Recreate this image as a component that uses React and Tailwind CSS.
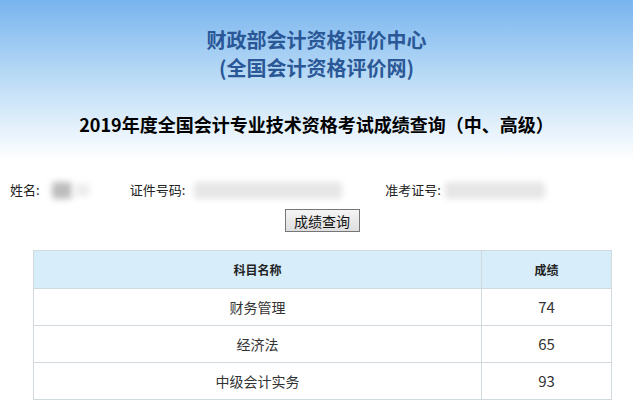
import React from 'react'

const font = { fontFamily: '"Noto Sans CJK SC", "Noto Sans", sans-serif' }

const rows = [
  { name: '财务管理', score: 74 },
  { name: '经济法', score: 65 },
  { name: '中级会计实务', score: 93 },
]

function Blur({ className }) {
  return <div className={`rounded-sm blur-[3px] ${className}`} />
}

export default function App() {
  return (
    <div className="w-[633px] h-[415px] overflow-hidden bg-white" style={font}>
      <div className="h-[160px] bg-gradient-to-b from-[#78b4ee] via-[#bcdcf6] to-white flex flex-col items-center">
        <h1 className="mt-[26px] text-[20px] leading-[28px] font-bold text-[#2a5796]">财政部会计资格评价中心</h1>
        <h2 className="text-[20px] leading-[28px] font-bold text-[#2a5796]">(全国会计资格评价网)</h2>
        <h3 className="mt-[29px] text-[18px] leading-[26px] font-bold text-black">
          2019年度全国会计专业技术资格考试成绩查询（中、高级）
        </h3>
      </div>

      <div className="flex items-center h-[20px] mt-[20px] text-[13px] text-[#222]">
        <span className="ml-[10px]">姓名:</span>
        <Blur className="ml-[12px] w-[20px] h-[17px] bg-[#bdbdbd]" />
        <Blur className="ml-[2px] w-[16px] h-[12px] bg-[#ececec]" />
        <span className="ml-[40px]">证件号码:</span>
        <Blur className="ml-[9px] w-[148px] h-[17px] bg-[#e6e6e6]" />
        <span className="ml-[43px]">准考证号:</span>
        <Blur className="ml-[4px] w-[100px] h-[17px] bg-[#e6e6e6]" />
      </div>

      <div className="flex justify-center mt-[9px] pl-[11px]">
        <button className="w-[75px] h-[23px] border border-[#767676] bg-gradient-to-b from-[#f5f5f5] to-[#dedede] text-[14px] leading-none text-[#111]">
          成绩查询
        </button>
      </div>

      <table className="ml-[33px] mt-[18px] w-[579px] border-collapse text-[#333]">
        <thead>
          <tr className="h-[38px] bg-[#d7edfa]">
            <th className="border border-[#cfd9de] text-[12px] font-bold text-[#222] w-[448px]">科目名称</th>
            <th className="border border-[#cfd9de] text-[12px] font-bold text-[#222]">成绩</th>
          </tr>
        </thead>
        <tbody>
          {rows.map(r => (
            <tr key={r.name} className="h-[37px]">
              <td className="border border-[#cfd9de] text-center text-[14px]">{r.name}</td>
              <td className="border border-[#cfd9de] text-center text-[15px]">{r.score}</td>
            </tr>
          ))}
        </tbody>
      </table>
    </div>
  )
}
